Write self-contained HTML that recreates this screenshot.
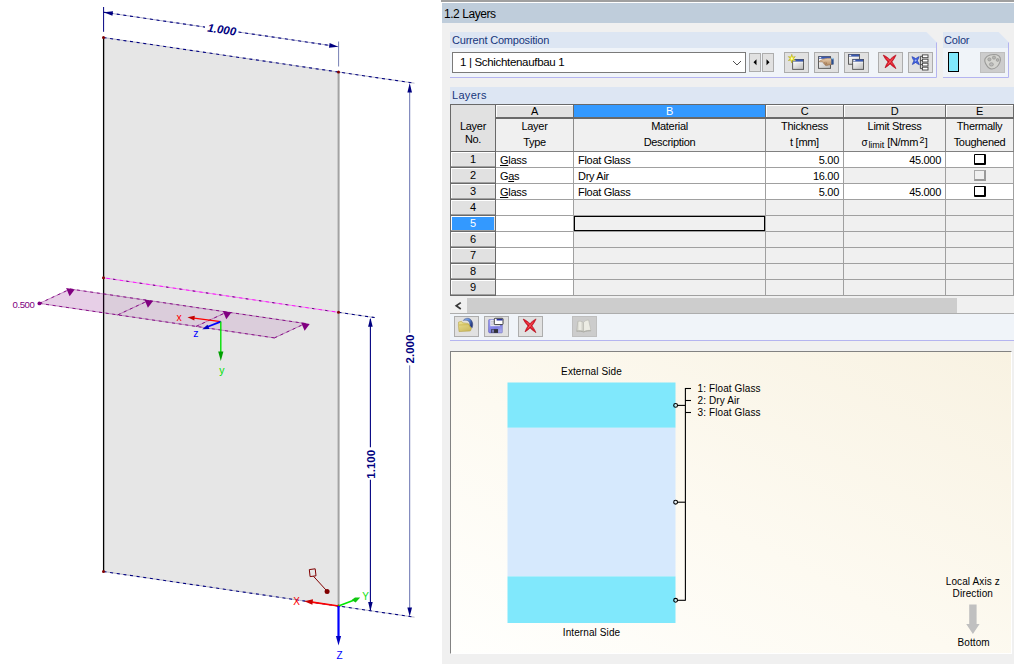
<!DOCTYPE html>
<html><head><meta charset="utf-8"><title>1.2 Layers</title>
<style>
html,body{margin:0;padding:0}
body{width:1014px;height:664px;overflow:hidden;background:#fff;position:relative;font-family:"Liberation Sans",sans-serif}
#right{position:absolute;left:0;top:0;width:1014px;height:664px}
#rbg{position:absolute;left:442px;top:23px;width:572px;height:641px;background:#f0f0f0}
.abs{position:absolute}
.t12{font-size:12px;line-height:14px;white-space:nowrap;letter-spacing:-0.55px}
.t11{font-size:11px;line-height:13px;white-space:nowrap;letter-spacing:-0.2px}
.blue{color:#17367c}
.btn{width:25px;height:21px;box-sizing:border-box;border:1px solid #adadad;background:#e1e1e1}
.btn.dis{background:#cccccc;border-color:#bfbfbf}
.spin{width:12px;height:19px;box-sizing:border-box;border:1px solid #adadad;background:#e1e1e1}
.tc{font-size:11px;line-height:13px;white-space:nowrap;letter-spacing:-0.3px;color:#000}
.hc{text-align:center}
.sub{font-size:9px;position:relative;top:2px;letter-spacing:0;margin-left:1px}
.sig{font-size:10px}
.sup{font-size:9px;position:relative;top:-3px;margin-left:1.5px;margin-right:0.5px}
.tc u{text-decoration:underline;text-underline-offset:1px}
#prev{box-sizing:border-box;border-top:1px solid #828282;border-left:1px solid #828282;border-right:1px solid #fff;border-bottom:1px solid #fff;background:linear-gradient(to top right,#fffffd 0%,#fdfaf1 45%,#f8f2e2 100%)}
</style></head><body>
<div id="rbg"></div>
<svg id="left" width="441" height="664" viewBox="0 0 441 664" style="position:absolute;left:0;top:0" font-family="'Liberation Sans', sans-serif">
<rect width="441" height="664" fill="#fff"/>
<polygon points="103.5,37.5 338.5,72.0 338.5,606.0 103.5,571.5" fill="#e6e6e6"/>
<line x1="338.6" y1="72.0" x2="338.6" y2="606.0" stroke="#a2a2a2" stroke-width="2"/>
<line x1="103.6" y1="37.5" x2="103.6" y2="571.5" stroke="#000" stroke-width="1.3"/>
<line x1="103.5" y1="37.5" x2="414.5" y2="83.2" stroke="#b0b0c4" stroke-width="0.9"/><line x1="103.5" y1="37.5" x2="414.5" y2="83.2" stroke="#000080" stroke-width="1.08" stroke-dasharray="3 3.7"/>
<line x1="103.5" y1="571.5" x2="414.5" y2="617.2" stroke="#b0b0c4" stroke-width="0.9"/><line x1="103.5" y1="571.5" x2="414.5" y2="617.2" stroke="#000080" stroke-width="1.08" stroke-dasharray="3 3.7"/>
<line x1="103.5" y1="277.8" x2="338.5" y2="312.3" stroke="#ee84ee" stroke-width="0.95"/>
<line x1="103.5" y1="277.8" x2="338.5" y2="312.3" stroke="#ff18ff" stroke-width="1" stroke-dasharray="3.4 3.3" stroke-dashoffset="-3"/>
<line x1="103.5" y1="277.8" x2="338.5" y2="312.3" stroke="#4c2a66" stroke-width="1" stroke-dasharray="2.2 11.2" stroke-dashoffset="-9.7"/>
<line x1="338.5" y1="312.3" x2="374.8" y2="317.6" stroke="#b0b0c4" stroke-width="0.9"/><line x1="338.5" y1="312.3" x2="374.8" y2="317.6" stroke="#000080" stroke-width="1.08" stroke-dasharray="3 3.7"/>
<line x1="103.5" y1="12.2" x2="205.0" y2="27.1" stroke="#a8a8c8" stroke-width="0.9"/><line x1="103.5" y1="12.2" x2="205.0" y2="27.1" stroke="#000080" stroke-width="1.08" stroke-dasharray="3 3.7"/>
<line x1="238.5" y1="32.0" x2="338.5" y2="46.7" stroke="#a8a8c8" stroke-width="0.9"/><line x1="238.5" y1="32.0" x2="338.5" y2="46.7" stroke="#000080" stroke-width="1.08" stroke-dasharray="3 3.7"/>
<polygon transform="translate(103.5,12.2) rotate(8.35)" points="0.3,0 9.3,-2.3 9.3,2.3" fill="#000080"/>
<polygon transform="translate(338.5,46.7) rotate(8.35)" points="-0.3,0 -9.3,-2.3 -9.3,2.3" fill="#000080"/>
<text transform="translate(221.8,29.6) rotate(8.35)" text-anchor="middle" y="4" font-size="11.5" font-weight="bold" font-style="italic" fill="#000080">1.000</text>
<line x1="103.6" y1="7" x2="103.6" y2="31.8" stroke="#000080" stroke-width="1"/>
<line x1="338.6" y1="41.5" x2="338.6" y2="66.5" stroke="#7880b4" stroke-width="1"/>
<line x1="409.7" y1="90" x2="409.7" y2="332.8" stroke="#6872b0" stroke-width="1"/>
<line x1="409.7" y1="365.4" x2="409.7" y2="610" stroke="#6872b0" stroke-width="1"/>
<polygon points="409.7,83 407.4,92.5 412.0,92.5" fill="#000080"/>
<polygon points="409.7,616.5 407.4,607.5 412.0,607.5" fill="#000080"/>
<text transform="translate(414.3,349) rotate(-90)" text-anchor="middle" font-size="11.5" font-weight="bold" fill="#000080">2.000</text>
<line x1="370.4" y1="319" x2="370.4" y2="447.3" stroke="#000080" stroke-width="1.1"/>
<line x1="370.4" y1="479.8" x2="370.4" y2="610" stroke="#000080" stroke-width="1.1"/>
<polygon points="370.4,317.8 368.09999999999997,326.8 372.7,326.8" fill="#000080"/>
<polygon points="370.4,611 368.09999999999997,602 372.7,602" fill="#000080"/>
<text transform="translate(375.2,464.3) rotate(-90)" text-anchor="middle" font-size="11.5" font-weight="bold" fill="#000080">1.100</text>
<clipPath id="cl"><rect x="0" y="250" width="103.5" height="120"/></clipPath><clipPath id="cr"><rect x="103.5" y="250" width="340" height="120"/></clipPath>
<polygon points="39.4,303.4 70.3,289.0 305.3,323.5 274.4,337.9" fill="rgba(128,0,128,0.19)" clip-path="url(#cl)"/>
<polygon points="39.4,303.4 70.3,289.0 305.3,323.5 274.4,337.9" fill="rgba(128,0,128,0.105)" clip-path="url(#cr)"/>
<line x1="39.4" y1="303.4" x2="274.4" y2="337.9" stroke="rgba(128,0,128,0.42)" stroke-width="0.9"/>
<line x1="70.3" y1="289.0" x2="305.3" y2="323.5" stroke="rgba(128,0,128,0.42)" stroke-width="0.9"/>
<line x1="39.4" y1="303.4" x2="70.3" y2="289.0" stroke="rgba(128,0,128,0.42)" stroke-width="0.9"/>
<line x1="117.7" y1="314.9" x2="148.6" y2="300.5" stroke="rgba(128,0,128,0.42)" stroke-width="0.9"/>
<line x1="196.1" y1="326.4" x2="227.0" y2="312.0" stroke="rgba(128,0,128,0.42)" stroke-width="0.9"/>
<line x1="274.4" y1="337.9" x2="305.3" y2="323.5" stroke="rgba(128,0,128,0.42)" stroke-width="0.9"/>
<line x1="39.4" y1="303.4" x2="274.4" y2="337.9" stroke="#800080" stroke-width="0.9" stroke-dasharray="3 3.7"/>
<line x1="70.3" y1="289.0" x2="305.3" y2="323.5" stroke="#800080" stroke-width="0.9" stroke-dasharray="3 3.7"/>
<line x1="39.4" y1="303.4" x2="70.3" y2="289.0" stroke="#800080" stroke-width="0.9" stroke-dasharray="3 3.7"/>
<polygon points="66.1,288.0 74.7,289.6 69.6,296.2" fill="#800080"/>
<line x1="117.7" y1="314.9" x2="148.6" y2="300.5" stroke="#800080" stroke-width="0.9" stroke-dasharray="3 3.7"/>
<polygon points="144.4,299.5 153.0,301.1 147.9,307.7" fill="#800080"/>
<line x1="196.1" y1="326.4" x2="227.0" y2="312.0" stroke="#800080" stroke-width="0.9" stroke-dasharray="3 3.7"/>
<polygon points="222.8,311.0 231.4,312.6 226.3,319.2" fill="#800080"/>
<line x1="274.4" y1="337.9" x2="305.3" y2="323.5" stroke="#800080" stroke-width="0.9" stroke-dasharray="3 3.7"/>
<polygon points="301.1,322.5 309.7,324.1 304.6,330.7" fill="#800080"/>
<circle cx="39.4" cy="303.4" r="1.9" fill="#800080"/>
<text x="12.6" y="308" font-size="9.6" letter-spacing="-0.45" fill="#800080">0.500</text>
<line x1="220.8" y1="321.6" x2="194" y2="318.2" stroke="#ff0000" stroke-width="1.35"/>
<polygon points="187.5,317.3 194.8,315.8 194.3,320.5" fill="#c40000"/>
<line x1="220.8" y1="321.6" x2="207" y2="327" stroke="#0000ff" stroke-width="1.8"/>
<polygon points="202.2,329.2 207.5,324.8 209.5,329" fill="#0000c0"/>
<line x1="220.8" y1="321.6" x2="220.8" y2="353" stroke="#00e000" stroke-width="1.4"/>
<polygon points="220.8,361 218.20000000000002,351.5 223.4,351.5" fill="#00a000"/>
<text x="176.4" y="321.2" font-size="10.5" fill="#ff0000">x</text>
<text x="193.2" y="337.3" font-size="10.5" fill="#0000ff">z</text>
<text x="219.2" y="374.2" font-size="10.5" fill="#00e000">y</text>
<circle cx="103.5" cy="37.5" r="1.5" fill="#800000"/>
<circle cx="338.5" cy="72.0" r="1.5" fill="#800000"/>
<circle cx="103.5" cy="571.5" r="1.5" fill="#800000"/>
<circle cx="338.5" cy="606.0" r="1.5" fill="#800000"/>
<circle cx="103.5" cy="277.8" r="1.5" fill="#800000"/>
<circle cx="338.5" cy="312.3" r="1.5" fill="#800000"/>
<polygon points="309.3,569.6 315.2,568.8 316,575.8 310.1,576.6" fill="none" stroke="#800000" stroke-width="1"/>
<line x1="313.5" y1="576.3" x2="326" y2="590" stroke="#800000" stroke-width="1"/>
<circle cx="327.1" cy="591.4" r="2.5" fill="#800000"/>
<line x1="338.5" y1="606.0" x2="312" y2="602.2" stroke="#ff0000" stroke-width="1.7"/>
<polygon points="304.2,601.2 313,599.2 312.4,604.8" fill="#c80000"/>
<line x1="338.5" y1="606.0" x2="353" y2="600.5" stroke="#00e800" stroke-width="1.7"/>
<polygon points="360.2,597.6 355,597.4 351.6,600 355.6,602.4" fill="#10c810"/>
<line x1="338.5" y1="606.0" x2="338.5" y2="637" stroke="#0000ff" stroke-width="2.2"/>
<polygon points="338.5,645.5 335.9,636 341.1,636" fill="#0000c0"/>
<text x="293.2" y="604.6" font-size="10" fill="#ff0000">X</text>
<text x="362.2" y="600" font-size="10" fill="#10e010">Y</text>
<text x="336.6" y="659" font-size="10" fill="#0000ff">Z</text>
</svg>
<div id="right">
  <div class="abs" style="left:441px;top:0;width:573px;height:2px;background:#a0a0a0"></div>
  <div class="abs" style="left:442px;top:3px;width:572px;height:20px;background:#bfcddb"></div>
  <div class="abs t12" style="left:444px;top:7px;color:#000;letter-spacing:-0.45px">1.2 Layers</div>

  <!-- group: Current Composition -->
  <svg class="abs" style="left:450px;top:32px" width="488" height="47" viewBox="0 0 488 47">
    <polygon points="0,0 476.5,0 487,10.5 487,45.5 0,45.5" fill="#f0f4f9"/>
    <polygon points="0,0 476.5,0 487,10.5 487,16 0,16" fill="#dde6f3"/>
    <polyline points="486.5,10.5 486.5,45.5 0,45.5" fill="none" stroke="#b4b4f0" stroke-width="1"/>
  </svg>
  <div class="abs t11 blue" style="left:452px;top:34px">Current Composition</div>
  <div class="abs" style="left:452px;top:52px;width:294px;height:21px;box-sizing:border-box;border:1px solid #7a7a7a;background:#fff"></div>
  <div class="abs t12" style="left:460px;top:55px;font-size:11.5px;letter-spacing:-0.32px">1 | Schichtenaufbau 1</div>
  <svg class="abs" style="left:731px;top:59px" width="12" height="8" viewBox="0 0 12 8"><polyline points="2,2 6,6 10,2" fill="none" stroke="#505050" stroke-width="1"/></svg>
  <div class="abs spin" style="left:749px;top:53px"></div>
  <div class="abs spin" style="left:762px;top:53px"></div>
  <svg class="abs" style="left:749px;top:53px" width="26" height="19" viewBox="0 0 26 19"><polygon points="4.5,9.3 7.5,6.3 7.5,12.3" fill="#000"/><polygon points="20.5,9.3 17.5,6.3 17.5,12.3" fill="#000"/></svg>

  <div class="abs btn" style="left:784px;top:52px"></div>
  <div class="abs btn" style="left:814px;top:52px"></div>
  <div class="abs btn" style="left:844px;top:52px"></div>
  <div class="abs btn" style="left:878px;top:52px"></div>
  <div class="abs btn" style="left:908px;top:52px"></div>

  <!-- group: Color -->
  <svg class="abs" style="left:942px;top:32px" width="68" height="47" viewBox="0 0 68 47">
    <polygon points="1,0 56.5,0 67,10.5 67,45.5 1,45.5" fill="#f0f4f9"/>
    <polygon points="1,0 56.5,0 67,10.5 67,16 1,16" fill="#dde6f3"/>
    <polyline points="66.5,10.5 66.5,45.5 1,45.5" fill="none" stroke="#b4b4f0" stroke-width="1"/>
  </svg>
  <div class="abs t11 blue" style="left:944px;top:34px">Color</div>
  <div class="abs" style="left:948px;top:52px;width:11px;height:20px;box-sizing:border-box;border:1px solid #000;background:#80e8fc"></div>
  <div class="abs btn dis" style="left:980px;top:52px"></div>

  <!-- Layers header -->
  <div class="abs" style="left:450px;top:87px;width:564px;height:17px;background:#dde6f3"></div>
  <div class="abs t11 blue" style="left:452px;top:89px;letter-spacing:0.3px">Layers</div>
  <div class="abs" style="left:450px;top:104px;width:564px;height:192px;background:#a0a0a0;"></div>
<div class="abs" style="left:450px;top:104px;width:564px;height:1px;background:#696969;"></div>
<div class="abs" style="left:450px;top:104px;width:1px;height:192px;background:#696969;"></div>
<div class="abs" style="left:451px;top:105px;width:44px;height:46px;background:#e1e1e1;"></div>
<div class="abs" style="left:495px;top:105px;width:1px;height:191px;background:#696969;"></div>
<div class="abs" style="left:451px;top:151px;width:563px;height:1px;background:#808080;"></div>
<div class="abs" style="left:451px;top:151px;width:45px;height:1px;background:#696969;"></div>
<div class="abs" style="left:496px;top:105px;width:77px;height:14px;background:#696969;"></div>
<div class="abs" style="left:496px;top:105px;width:77px;height:12px;background:#e1e1e1;"></div>
<div class="abs" style="left:496px;top:105px;width:77px;height:1px;background:#fff;"></div>
<div class="abs" style="left:496px;top:105px;width:1px;height:12px;background:#fff;"></div>
<div class="abs" style="left:496px;top:119px;width:77px;height:32px;background:#f0f0f0;"></div>
<div class="abs" style="left:573px;top:105px;width:1px;height:14px;background:#696969;"></div>
<div class="abs" style="left:573px;top:119px;width:1px;height:32px;background:#8c8c8c;"></div>
<div class="abs tc hc" style="left:496px;top:105px;width:77px;">A</div>
<div class="abs" style="left:574px;top:105px;width:191px;height:14px;background:#696969;"></div>
<div class="abs" style="left:574px;top:105px;width:191px;height:12px;background:#3399ff;"></div>
<div class="abs" style="left:574px;top:119px;width:191px;height:32px;background:#f0f0f0;"></div>
<div class="abs" style="left:765px;top:105px;width:1px;height:14px;background:#696969;"></div>
<div class="abs" style="left:765px;top:119px;width:1px;height:32px;background:#8c8c8c;"></div>
<div class="abs tc hc" style="left:574px;top:105px;width:191px;color:#fff;">B</div>
<div class="abs" style="left:766px;top:105px;width:77px;height:14px;background:#696969;"></div>
<div class="abs" style="left:766px;top:105px;width:77px;height:12px;background:#e1e1e1;"></div>
<div class="abs" style="left:766px;top:105px;width:77px;height:1px;background:#fff;"></div>
<div class="abs" style="left:766px;top:105px;width:1px;height:12px;background:#fff;"></div>
<div class="abs" style="left:766px;top:119px;width:77px;height:32px;background:#f0f0f0;"></div>
<div class="abs" style="left:843px;top:105px;width:1px;height:14px;background:#696969;"></div>
<div class="abs" style="left:843px;top:119px;width:1px;height:32px;background:#8c8c8c;"></div>
<div class="abs tc hc" style="left:766px;top:105px;width:77px;">C</div>
<div class="abs" style="left:844px;top:105px;width:101px;height:14px;background:#696969;"></div>
<div class="abs" style="left:844px;top:105px;width:101px;height:12px;background:#e1e1e1;"></div>
<div class="abs" style="left:844px;top:105px;width:101px;height:1px;background:#fff;"></div>
<div class="abs" style="left:844px;top:105px;width:1px;height:12px;background:#fff;"></div>
<div class="abs" style="left:844px;top:119px;width:101px;height:32px;background:#f0f0f0;"></div>
<div class="abs" style="left:945px;top:105px;width:1px;height:14px;background:#696969;"></div>
<div class="abs" style="left:945px;top:119px;width:1px;height:32px;background:#8c8c8c;"></div>
<div class="abs tc hc" style="left:844px;top:105px;width:101px;">D</div>
<div class="abs" style="left:946px;top:105px;width:67px;height:14px;background:#696969;"></div>
<div class="abs" style="left:946px;top:105px;width:67px;height:12px;background:#e1e1e1;"></div>
<div class="abs" style="left:946px;top:105px;width:67px;height:1px;background:#fff;"></div>
<div class="abs" style="left:946px;top:105px;width:1px;height:12px;background:#fff;"></div>
<div class="abs" style="left:946px;top:119px;width:67px;height:32px;background:#f0f0f0;"></div>
<div class="abs" style="left:1013px;top:105px;width:1px;height:14px;background:#696969;"></div>
<div class="abs" style="left:1013px;top:119px;width:1px;height:32px;background:#8c8c8c;"></div>
<div class="abs tc hc" style="left:946px;top:105px;width:67px;">E</div>
<div class="abs tc hc" style="left:496px;top:120px;width:77px;">Layer</div>
<div class="abs tc hc" style="left:496px;top:136px;width:77px;">Type</div>
<div class="abs tc hc" style="left:574px;top:120px;width:191px;">Material</div>
<div class="abs tc hc" style="left:574px;top:136px;width:191px;">Description</div>
<div class="abs tc hc" style="left:766px;top:120px;width:77px;">Thickness</div>
<div class="abs tc hc" style="left:766px;top:136px;width:77px;">t [mm]</div>
<div class="abs tc hc" style="left:844px;top:120px;width:101px;">Limit Stress</div>
<div class="abs tc hc" style="left:844px;top:136px;width:101px;"><span class="sig">&sigma;</span><span class="sub">limit</span> [N/mm<span class="sup">2</span>]</div>
<div class="abs tc hc" style="left:946px;top:120px;width:67px;">Thermally</div>
<div class="abs tc hc" style="left:946px;top:136px;width:67px;">Toughened</div>
<div class="abs tc hc" style="left:451px;top:120px;width:44px;">Layer</div>
<div class="abs tc hc" style="left:451px;top:133px;width:44px;">No.</div>
<div class="abs" style="left:496px;top:152px;width:77px;height:15px;background:#fff;"></div>
<div class="abs" style="left:574px;top:152px;width:191px;height:15px;background:#fff;"></div>
<div class="abs" style="left:766px;top:152px;width:77px;height:15px;background:#fff;"></div>
<div class="abs" style="left:844px;top:152px;width:101px;height:15px;background:#fff;"></div>
<div class="abs" style="left:946px;top:152px;width:67px;height:15px;background:#fff;"></div>
<div class="abs" style="left:451px;top:152px;width:44px;height:16px;background:#696969;"></div>
<div class="abs" style="left:451px;top:152px;width:44px;height:15px;background:#a0a0a0;"></div>
<div class="abs" style="left:451px;top:152px;width:44px;height:14px;background:#e1e1e1;"></div>
<div class="abs" style="left:451px;top:152px;width:44px;height:1px;background:#fff;"></div>
<div class="abs" style="left:451px;top:152px;width:1px;height:14px;background:#fff;"></div>
<div class="abs tc hc" style="left:451px;top:153px;width:44px;">1</div>
<div class="abs" style="left:496px;top:168px;width:77px;height:15px;background:#fff;"></div>
<div class="abs" style="left:574px;top:168px;width:191px;height:15px;background:#fff;"></div>
<div class="abs" style="left:766px;top:168px;width:77px;height:15px;background:#fff;"></div>
<div class="abs" style="left:844px;top:168px;width:101px;height:15px;background:#f0f0f0;"></div>
<div class="abs" style="left:946px;top:168px;width:67px;height:15px;background:#f0f0f0;"></div>
<div class="abs" style="left:451px;top:168px;width:44px;height:16px;background:#696969;"></div>
<div class="abs" style="left:451px;top:168px;width:44px;height:15px;background:#a0a0a0;"></div>
<div class="abs" style="left:451px;top:168px;width:44px;height:14px;background:#e1e1e1;"></div>
<div class="abs" style="left:451px;top:168px;width:44px;height:1px;background:#fff;"></div>
<div class="abs" style="left:451px;top:168px;width:1px;height:14px;background:#fff;"></div>
<div class="abs tc hc" style="left:451px;top:169px;width:44px;">2</div>
<div class="abs" style="left:496px;top:184px;width:77px;height:15px;background:#fff;"></div>
<div class="abs" style="left:574px;top:184px;width:191px;height:15px;background:#fff;"></div>
<div class="abs" style="left:766px;top:184px;width:77px;height:15px;background:#fff;"></div>
<div class="abs" style="left:844px;top:184px;width:101px;height:15px;background:#fff;"></div>
<div class="abs" style="left:946px;top:184px;width:67px;height:15px;background:#fff;"></div>
<div class="abs" style="left:451px;top:184px;width:44px;height:16px;background:#696969;"></div>
<div class="abs" style="left:451px;top:184px;width:44px;height:15px;background:#a0a0a0;"></div>
<div class="abs" style="left:451px;top:184px;width:44px;height:14px;background:#e1e1e1;"></div>
<div class="abs" style="left:451px;top:184px;width:44px;height:1px;background:#fff;"></div>
<div class="abs" style="left:451px;top:184px;width:1px;height:14px;background:#fff;"></div>
<div class="abs tc hc" style="left:451px;top:185px;width:44px;">3</div>
<div class="abs" style="left:496px;top:200px;width:77px;height:15px;background:#fff;"></div>
<div class="abs" style="left:574px;top:200px;width:191px;height:15px;background:#f0f0f0;"></div>
<div class="abs" style="left:766px;top:200px;width:77px;height:15px;background:#f0f0f0;"></div>
<div class="abs" style="left:844px;top:200px;width:101px;height:15px;background:#f0f0f0;"></div>
<div class="abs" style="left:946px;top:200px;width:67px;height:15px;background:#f0f0f0;"></div>
<div class="abs" style="left:451px;top:200px;width:44px;height:16px;background:#696969;"></div>
<div class="abs" style="left:451px;top:200px;width:44px;height:15px;background:#a0a0a0;"></div>
<div class="abs" style="left:451px;top:200px;width:44px;height:14px;background:#e1e1e1;"></div>
<div class="abs" style="left:451px;top:200px;width:44px;height:1px;background:#fff;"></div>
<div class="abs" style="left:451px;top:200px;width:1px;height:14px;background:#fff;"></div>
<div class="abs tc hc" style="left:451px;top:201px;width:44px;">4</div>
<div class="abs" style="left:496px;top:216px;width:77px;height:15px;background:#fff;"></div>
<div class="abs" style="left:574px;top:216px;width:191px;height:15px;background:#f0f0f0;"></div>
<div class="abs" style="left:766px;top:216px;width:77px;height:15px;background:#f0f0f0;"></div>
<div class="abs" style="left:844px;top:216px;width:101px;height:15px;background:#f0f0f0;"></div>
<div class="abs" style="left:946px;top:216px;width:67px;height:15px;background:#f0f0f0;"></div>
<div class="abs" style="left:451px;top:216px;width:44px;height:16px;background:#696969;"></div>
<div class="abs" style="left:451px;top:216px;width:44px;height:15px;background:#a0a0a0;"></div>
<div class="abs" style="left:451px;top:216px;width:44px;height:14px;background:#e1e1e1;"></div>
<div class="abs" style="left:451px;top:216px;width:44px;height:1px;background:#fff;"></div>
<div class="abs" style="left:451px;top:216px;width:1px;height:14px;background:#fff;"></div>
<div class="abs" style="left:452px;top:217px;width:42px;height:13px;background:#3399ff;"></div>
<div class="abs tc hc" style="left:451px;top:217px;width:44px;color:#fff;">5</div>
<div class="abs" style="left:496px;top:232px;width:77px;height:15px;background:#fff;"></div>
<div class="abs" style="left:574px;top:232px;width:191px;height:15px;background:#f0f0f0;"></div>
<div class="abs" style="left:766px;top:232px;width:77px;height:15px;background:#f0f0f0;"></div>
<div class="abs" style="left:844px;top:232px;width:101px;height:15px;background:#f0f0f0;"></div>
<div class="abs" style="left:946px;top:232px;width:67px;height:15px;background:#f0f0f0;"></div>
<div class="abs" style="left:451px;top:232px;width:44px;height:16px;background:#696969;"></div>
<div class="abs" style="left:451px;top:232px;width:44px;height:15px;background:#a0a0a0;"></div>
<div class="abs" style="left:451px;top:232px;width:44px;height:14px;background:#e1e1e1;"></div>
<div class="abs" style="left:451px;top:232px;width:44px;height:1px;background:#fff;"></div>
<div class="abs" style="left:451px;top:232px;width:1px;height:14px;background:#fff;"></div>
<div class="abs tc hc" style="left:451px;top:233px;width:44px;">6</div>
<div class="abs" style="left:496px;top:248px;width:77px;height:15px;background:#fff;"></div>
<div class="abs" style="left:574px;top:248px;width:191px;height:15px;background:#f0f0f0;"></div>
<div class="abs" style="left:766px;top:248px;width:77px;height:15px;background:#f0f0f0;"></div>
<div class="abs" style="left:844px;top:248px;width:101px;height:15px;background:#f0f0f0;"></div>
<div class="abs" style="left:946px;top:248px;width:67px;height:15px;background:#f0f0f0;"></div>
<div class="abs" style="left:451px;top:248px;width:44px;height:16px;background:#696969;"></div>
<div class="abs" style="left:451px;top:248px;width:44px;height:15px;background:#a0a0a0;"></div>
<div class="abs" style="left:451px;top:248px;width:44px;height:14px;background:#e1e1e1;"></div>
<div class="abs" style="left:451px;top:248px;width:44px;height:1px;background:#fff;"></div>
<div class="abs" style="left:451px;top:248px;width:1px;height:14px;background:#fff;"></div>
<div class="abs tc hc" style="left:451px;top:249px;width:44px;">7</div>
<div class="abs" style="left:496px;top:264px;width:77px;height:15px;background:#fff;"></div>
<div class="abs" style="left:574px;top:264px;width:191px;height:15px;background:#f0f0f0;"></div>
<div class="abs" style="left:766px;top:264px;width:77px;height:15px;background:#f0f0f0;"></div>
<div class="abs" style="left:844px;top:264px;width:101px;height:15px;background:#f0f0f0;"></div>
<div class="abs" style="left:946px;top:264px;width:67px;height:15px;background:#f0f0f0;"></div>
<div class="abs" style="left:451px;top:264px;width:44px;height:16px;background:#696969;"></div>
<div class="abs" style="left:451px;top:264px;width:44px;height:15px;background:#a0a0a0;"></div>
<div class="abs" style="left:451px;top:264px;width:44px;height:14px;background:#e1e1e1;"></div>
<div class="abs" style="left:451px;top:264px;width:44px;height:1px;background:#fff;"></div>
<div class="abs" style="left:451px;top:264px;width:1px;height:14px;background:#fff;"></div>
<div class="abs tc hc" style="left:451px;top:265px;width:44px;">8</div>
<div class="abs" style="left:496px;top:280px;width:77px;height:15px;background:#fff;"></div>
<div class="abs" style="left:574px;top:280px;width:191px;height:15px;background:#f0f0f0;"></div>
<div class="abs" style="left:766px;top:280px;width:77px;height:15px;background:#f0f0f0;"></div>
<div class="abs" style="left:844px;top:280px;width:101px;height:15px;background:#f0f0f0;"></div>
<div class="abs" style="left:946px;top:280px;width:67px;height:15px;background:#f0f0f0;"></div>
<div class="abs" style="left:451px;top:280px;width:44px;height:16px;background:#696969;"></div>
<div class="abs" style="left:451px;top:280px;width:44px;height:15px;background:#a0a0a0;"></div>
<div class="abs" style="left:451px;top:280px;width:44px;height:14px;background:#e1e1e1;"></div>
<div class="abs" style="left:451px;top:280px;width:44px;height:1px;background:#fff;"></div>
<div class="abs" style="left:451px;top:280px;width:1px;height:14px;background:#fff;"></div>
<div class="abs tc hc" style="left:451px;top:281px;width:44px;">9</div>
<div class="abs" style="left:574px;top:216px;width:191px;height:15px;box-sizing:border-box;border:1.5px solid #000;background:#f0f0f0"></div>
<div class="abs tc" style="left:500px;top:154px;"><u>G</u>lass</div>
<div class="abs tc" style="left:578px;top:154px;">Float Glass</div>
<div class="abs tc" style="left:766px;top:154px;width:73px;text-align:right;">5.00</div>
<div class="abs tc" style="left:844px;top:154px;width:97px;text-align:right;">45.000</div>
<div class="abs tc" style="left:500px;top:170px;">G<u>a</u>s</div>
<div class="abs tc" style="left:578px;top:170px;">Dry Air</div>
<div class="abs tc" style="left:766px;top:170px;width:73px;text-align:right;">16.00</div>
<div class="abs tc" style="left:500px;top:186px;"><u>G</u>lass</div>
<div class="abs tc" style="left:578px;top:186px;">Float Glass</div>
<div class="abs tc" style="left:766px;top:186px;width:73px;text-align:right;">5.00</div>
<div class="abs tc" style="left:844px;top:186px;width:97px;text-align:right;">45.000</div>
<div class="abs" style="left:974px;top:154px;width:12px;height:11px;box-sizing:border-box;border:1px solid #000;border-right:2px solid #000;border-bottom:2px solid #000;background:#fff;border-radius:1px"></div>
<div class="abs" style="left:974px;top:170px;width:12px;height:11px;box-sizing:border-box;border:1px solid #a8a8a8;border-right:2px solid #9a9a9a;border-bottom:2px solid #9a9a9a;background:#f0f0f0"></div>
<div class="abs" style="left:974px;top:186px;width:12px;height:11px;box-sizing:border-box;border:1px solid #000;border-right:2px solid #000;border-bottom:2px solid #000;background:#fff;border-radius:1px"></div>
  <!-- scrollbar -->
  <div class="abs" style="left:451px;top:298px;width:563px;height:15px;background:#f0f0f0"></div>
  <div class="abs" style="left:467px;top:298px;width:490px;height:15px;background:#cdcdcd"></div>
  <svg class="abs" style="left:454px;top:300px" width="10" height="11" viewBox="0 0 10 11"><polyline points="6.8,2.6 2.2,5.8 6.8,9" fill="none" stroke="#383838" stroke-width="1.7"/></svg>
  <!-- toolbar -->
  <div class="abs" style="left:450px;top:313px;width:564px;height:1px;background:#adadad;z-index:2"></div>
  <div class="abs" style="left:450px;top:313px;width:564px;height:27px;background:#f0f4f9;border-bottom:1px solid #b4b4f0"></div>
  <div class="abs btn b2" style="left:454px;top:316px"></div>
  <div class="abs btn b2" style="left:484px;top:316px"></div>
  <div class="abs btn b2" style="left:518px;top:316px"></div>
  <div class="abs btn b2 dis" style="left:572px;top:316px"></div>
  <svg width="0" height="0" style="position:absolute"><defs>
<linearGradient id="gw" x1="0" y1="0" x2="1" y2="1"><stop offset="0" stop-color="#fafafa"/><stop offset="1" stop-color="#bdbdbd"/></linearGradient>
<linearGradient id="gf" x1="0" y1="0" x2="0.6" y2="1"><stop offset="0" stop-color="#ece294"/><stop offset="1" stop-color="#cdbc62"/></linearGradient>
<linearGradient id="gd" x1="0" y1="0" x2="1" y2="1"><stop offset="0" stop-color="#a0a0f4"/><stop offset="0.6" stop-color="#7c7ce0"/><stop offset="1" stop-color="#b8b8f0"/></linearGradient>
<linearGradient id="ga" x1="0" y1="0" x2="1" y2="0.4"><stop offset="0" stop-color="#a8c8f4"/><stop offset="0.6" stop-color="#5c88d8"/><stop offset="1" stop-color="#283c80"/></linearGradient>
<radialGradient id="gs"><stop offset="0" stop-color="#ffffe0"/><stop offset="0.45" stop-color="#f6f030"/><stop offset="1" stop-color="#e8dc10"/></radialGradient>
<linearGradient id="gh" x1="0" y1="0" x2="0" y2="1"><stop offset="0" stop-color="#ecd0b0"/><stop offset="1" stop-color="#b08860"/></linearGradient>
<linearGradient id="gb" x1="0" y1="0" x2="1" y2="0"><stop offset="0" stop-color="#c8c8c0"/><stop offset="0.5" stop-color="#f0f0e8"/><stop offset="1" stop-color="#c4c4bc"/></linearGradient>
</defs></svg>
<svg class="abs" style="left:0;top:0;pointer-events:none" width="1014" height="345" viewBox="0 0 1014 345">
<g id="ic-new"><rect x="792.2" y="59.0" width="11.8" height="10.8" fill="#505050"/><rect x="793.0" y="59.5" width="10.200000000000001" height="2.2" fill="#3858b4"/><rect x="793.1" y="61.9" width="10.0" height="7.000000000000001" fill="url(#gw)"/><rect x="793.1" y="61.7" width="10.0" height="0.7" fill="#fff"/><rect x="793.3000000000001" y="59.9" width="2" height="1.2" fill="#e8e8f0"/><polygon points="791.80,54.28 792.65,57.13 795.26,56.60 793.50,58.60 795.26,60.60 792.65,60.07 791.80,62.92 790.95,60.07 788.34,60.60 790.10,58.60 788.34,56.60 790.95,57.13" fill="url(#gs)" stroke="#a8a010" stroke-width="0.5"/></g>
<g id="ic-hand"><rect x="818.1" y="56.1" width="12.9" height="12.7" fill="#505050"/><rect x="818.9" y="56.6" width="11.3" height="2.2" fill="#3858b4"/><rect x="819.0" y="59.0" width="11.1" height="8.899999999999999" fill="url(#gw)"/><rect x="819.0" y="58.800000000000004" width="11.1" height="0.7" fill="#fff"/><rect x="819.2" y="57.0" width="2" height="1.2" fill="#e8e8f0"/><path d="M819,61.6 C820.5,60.2 823,59.3 825.5,58.6 C828,58 830.5,58.2 832.6,58.6 L832.8,64.2 C831,65 829,64.8 827.8,65.2 C826.8,66 825.2,65.6 824.6,64.4 C823.6,63.6 822.8,62.6 822.6,61.8 C821.4,62 820,62.2 819,61.6Z" fill="url(#gh)" stroke="#80583c" stroke-width="0.4"/><path d="M831.2,58.2 L833.6,58.4 L833.6,64.4 L831.4,64.6Z" fill="#2c5090"/><path d="M831.2,57.6 L833.6,58 L833.4,59.4 L831.4,59.1Z" fill="#9cc8e8"/><path d="M824.4,62.2 L825.6,64.6 M825.8,61.8 L827,64.6" stroke="#8a6040" stroke-width="0.5" fill="none"/></g>
<g id="ic-two"><rect x="848.1" y="54.0" width="11.8" height="10.7" fill="#505050"/><rect x="848.9" y="54.5" width="10.200000000000001" height="2.2" fill="#3858b4"/><rect x="849.0" y="56.9" width="10.0" height="6.8999999999999995" fill="url(#gw)"/><rect x="849.0" y="56.7" width="10.0" height="0.7" fill="#fff"/><rect x="849.2" y="54.9" width="2" height="1.2" fill="#e8e8f0"/><rect x="852.2" y="59.0" width="11.8" height="10.8" fill="#505050"/><rect x="853.0" y="59.5" width="10.200000000000001" height="2.2" fill="#3858b4"/><rect x="853.1" y="61.9" width="10.0" height="7.000000000000001" fill="url(#gw)"/><rect x="853.1" y="61.7" width="10.0" height="0.7" fill="#fff"/><rect x="853.3000000000001" y="59.9" width="2" height="1.2" fill="#e8e8f0"/></g>
<g id="ic-x1"><path d="M883.10,55.00 C888.00,56.80 893.60,62.40 896.00,68.70 C891.00,65.40 885.50,60.40 883.10,55.00Z" fill="#e01828" stroke="#a00010" stroke-width="0.5"/><path d="M896.10,54.90 C894.00,60.30 889.30,65.40 885.00,67.90 C886.40,62.70 891.20,57.20 896.10,54.90Z" fill="#e01828" stroke="#a00010" stroke-width="0.5"/><path d="M886.80,58.30 L892.80,64.40" stroke="#ff7070" stroke-width="0.7" fill="none"/><path d="M893.00,58.30 L887.80,64.40" stroke="#ff7070" stroke-width="0.7" fill="none"/></g>
<g id="ic-tree"><g stroke="#404040" stroke-width="0.9" fill="#fff"><path d="M920.4,56.3 V68.7 M920.4,56.3 H922.4 M920.4,60.6 H922.4 M920.4,64.6 H922.4 M920.4,68.6 H922.4" fill="none"/><rect x="922.4" y="54.9" width="5.6" height="2.8"/><rect x="922.4" y="59.2" width="5.6" height="2.8"/><rect x="922.4" y="63.2" width="5.6" height="2.8"/><rect x="922.4" y="67.2" width="5.6" height="2.8"/></g><path d="M911.9,56.6 C915.2,57.4 918.4,61 919.4,64.8 C916,63.6 912.8,60.4 911.9,56.6Z" fill="#4060e0" stroke="#2038a0" stroke-width="0.5"/><path d="M919.2,56.5 C918.6,60 915.4,63.4 912.3,64.6 C913,61 916,57.6 919.2,56.5Z" fill="#4060e0" stroke="#2038a0" stroke-width="0.5"/><circle cx="915.6" cy="60.6" r="1" fill="#a0b8ff"/></g>
<g id="ic-pal"><path d="M985.2,58.4 C987,55.2 992.5,53.8 996.6,54.8 C1000.4,55.8 1001.2,59 999.8,62.4 C998.6,65.6 995.6,68.6 992,69 C988.8,69.2 987.4,67 986.2,64.6 C985,62.6 984.2,60.4 985.2,58.4Z" fill="#d4d4d0" stroke="#9a9a98" stroke-width="1.1"/><circle cx="989.4" cy="59.4" r="1.6" fill="#b4b4b2" stroke="#8e8e8c" stroke-width="0.6"/><circle cx="994" cy="57.6" r="1.6" fill="#b4b4b2" stroke="#8e8e8c" stroke-width="0.6"/><circle cx="997.6" cy="60" r="1.4" fill="#b4b4b2" stroke="#8e8e8c" stroke-width="0.6"/><ellipse cx="991.4" cy="64.4" rx="2" ry="1.7" fill="#bababa" stroke="#8e8e8c" stroke-width="0.6"/></g>
<g id="ic-fold"><path d="M463.2,320.4 C465,318 468.6,317.6 470.6,319.4 C472.6,321.2 473.4,324.2 472.2,327.8 L469.6,326 C470.2,323.6 469.6,321.8 468,320.8 C466.6,320 464.8,320.2 463.2,320.4Z" fill="url(#ga)" stroke="#1c2c68" stroke-width="0.4"/><path d="M458.6,322 L461.6,321.3 L462.6,322.8 L468.2,323.4 L471.4,328.6 L470.4,331 L459,331.6 L458.4,325Z" fill="url(#gf)" stroke="#b09c38" stroke-width="0.5"/><path d="M459,325 L468.6,324.6 L471.2,328.6" fill="none" stroke="#c4ac40" stroke-width="0.6"/></g>
<g id="ic-flop"><path d="M488.6,320.2 Q488.6,319.6 489.2,319.6 L501.6,319.6 Q502.3,319.6 502.3,320.3 L502.3,332.2 Q502.3,332.9 501.6,332.9 L489.4,332.9 L488.5,332 Z" fill="url(#gd)" stroke="#5858b8" stroke-width="0.5"/><rect x="490.3" y="319.8" width="9.6" height="6.4" fill="#ececf2"/><path d="M491,321.4 H495 M491,323 H495 M491,324.6 H499" stroke="#b0b0b8" stroke-width="0.6"/><rect x="491.3" y="329.1" width="6.7" height="3.8" fill="#303038"/><rect x="492.2" y="329.6" width="1.6" height="3" fill="#8a8ad0"/><rect x="494.3" y="318.3" width="8.7" height="6.3" rx="0.8" fill="#fff" stroke="#303030" stroke-width="0.9"/><rect x="496.6" y="318.9" width="6" height="1.6" fill="#28309c"/></g>
<g id="ic-x2"><path d="M523.10,319.00 C528.00,320.80 533.60,326.40 536.00,332.70 C531.00,329.40 525.50,324.40 523.10,319.00Z" fill="#e01828" stroke="#a00010" stroke-width="0.5"/><path d="M536.10,318.90 C534.00,324.30 529.30,329.40 525.00,331.90 C526.40,326.70 531.20,321.20 536.10,318.90Z" fill="#e01828" stroke="#a00010" stroke-width="0.5"/><path d="M526.80,322.30 L532.80,328.40" stroke="#ff7070" stroke-width="0.7" fill="none"/><path d="M533.00,322.30 L527.80,328.40" stroke="#ff7070" stroke-width="0.7" fill="none"/></g>
<g id="ic-book"><path d="M577.8,321.4 C579.8,320.8 582,321.4 583.5,322.6 L583.6,331.2 C581.4,330.4 578.8,330.4 576.6,331.2Z" fill="url(#gb)" stroke="#b0b0a8" stroke-width="0.5"/><path d="M583.5,322.6 C584.6,320.8 586.6,320 588.6,320 L590.9,330.4 C588.4,330.2 585.6,330.6 583.6,331.6Z" fill="#ecece4" stroke="#b0b0a8" stroke-width="0.5"/><path d="M576.6,331.2 C579,331 581.6,331.2 583.6,332 C585.8,331 588.6,330.8 590.9,330.8" fill="none" stroke="#a4a49c" stroke-width="0.8"/></g>
</svg>
  <!-- preview -->
  <div class="abs" id="prev" style="left:450px;top:351px;width:562px;height:303px"></div>
  <svg class="abs" style="left:451px;top:352px" width="560" height="301" viewBox="451 352 560 301" font-family="'Liberation Sans', sans-serif" font-size="10" fill="#000">
  <rect x="507.5" y="382.5" width="168" height="45.3" fill="#80e8fc"/>
  <rect x="507.5" y="427.8" width="168" height="148.6" fill="#d6e9fd"/>
  <rect x="507.5" y="576.4" width="168" height="46.6" fill="#80e8fc"/>
  <text x="591.5" y="375.0" text-anchor="middle" letter-spacing="0.1">External Side</text>
  <text x="591.5" y="636.0" text-anchor="middle" letter-spacing="0.1">Internal Side</text>
  <g stroke="#000" stroke-width="1.1" fill="none">
    <line x1="685.4" y1="388" x2="685.4" y2="600.8"/>
    <line x1="685" y1="388.5" x2="691" y2="388.5"/>
    <line x1="685" y1="400.5" x2="691" y2="400.5"/>
    <line x1="685" y1="412.5" x2="691" y2="412.5"/>
    <line x1="677" y1="405.4" x2="685" y2="405.4"/>
    <line x1="677" y1="502.2" x2="685" y2="502.2"/>
    <line x1="677" y1="600.3" x2="685" y2="600.3"/>
    <circle cx="675.6" cy="405.4" r="1.9"/>
    <circle cx="675.6" cy="502.2" r="1.9"/>
    <circle cx="675.6" cy="600.3" r="1.9"/>
  </g>
  <text x="697.6" y="392.3" letter-spacing="0.1">1: Float Glass</text>
  <text x="697.6" y="404.2" letter-spacing="0.1">2: Dry Air</text>
  <text x="697.6" y="416.1" letter-spacing="0.1">3: Float Glass</text>
  <text x="972.8" y="585.2" text-anchor="middle" letter-spacing="0.1">Local Axis z</text>
  <text x="972.8" y="597.2" text-anchor="middle" letter-spacing="0.1">Direction</text>
  <polygon points="969.2,604.6 976.6,604.6 976.6,624 979.6,624 972.9,634 966.2,624 969.2,624" fill="#c0c0c0"/>
  <text x="973.6" y="646.3" text-anchor="middle" letter-spacing="0.1">Bottom</text>
</svg>

</div>

</body></html>
